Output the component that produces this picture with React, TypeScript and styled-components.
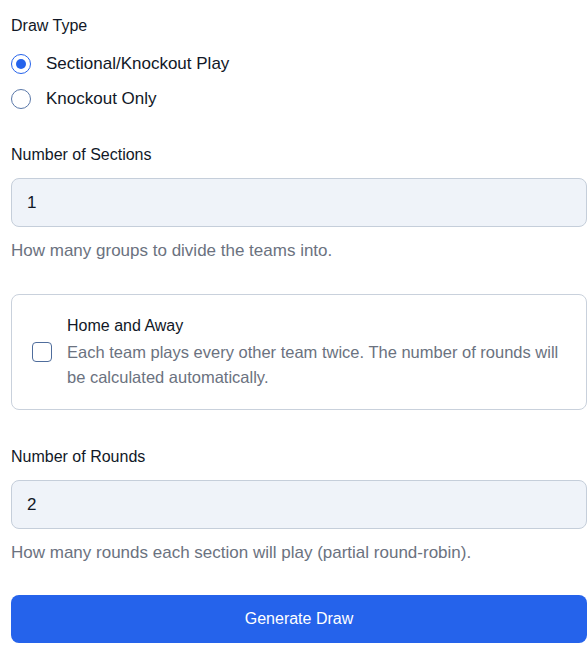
import React, { useState } from "react";
import styled, { createGlobalStyle } from "styled-components";

const GlobalStyle = createGlobalStyle`
  * { box-sizing: border-box; }
  body {
    margin: 0;
    background: #ffffff;
    font-family: "Liberation Sans", Arial, sans-serif;
  }
`;

const Form = styled.form`
  width: 588px;
  padding: 14px 1px 0 11px;
  display: flex;
  flex-direction: column;
`;

const Field = styled.div<{ $gapBelow?: number }>`
  display: flex;
  flex-direction: column;
  margin-bottom: ${(p) => p.$gapBelow ?? 31}px;
`;

const Label = styled.label`
  font-size: 16px;
  line-height: 24px;
  color: #111827;
  margin-bottom: 11px;
`;

const GroupLabel = styled(Label)`
  margin-bottom: 14px;
`;

const Options = styled.div`
  display: flex;
  flex-direction: column;
  gap: 11px;
`;

const OptionRow = styled.label`
  display: flex;
  align-items: center;
  gap: 15px;
  height: 24px;
  font-size: 17px;
  color: #111827;
  cursor: pointer;
`;

const Radio = styled.input.attrs({ type: "radio" })`
  appearance: none;
  margin: 0;
  width: 20px;
  height: 20px;
  border-radius: 50%;
  border: 1.5px solid #5a78a8;
  background: #ffffff;
  display: grid;
  place-items: center;

  &:checked {
    border-color: #2563eb;
  }
  &:checked::after {
    content: "";
    width: 10px;
    height: 10px;
    border-radius: 50%;
    background: #2563eb;
  }
`;

const TextInput = styled.input`
  height: 49px;
  width: 100%;
  padding: 0 15px;
  border: 1px solid #c5ceda;
  border-radius: 8px;
  background: #eff3f9;
  font-family: inherit;
  font-size: 17px;
  color: #111827;
  outline: none;
`;

const Help = styled.p`
  margin: 12px 0 0;
  font-size: 17px;
  line-height: 24px;
  color: #6b7280;
`;

const Card = styled.label`
  display: flex;
  align-items: center;
  gap: 15px;
  padding: 19px 20px 19px;
  border: 1px solid #c9d1dc;
  border-radius: 8px;
  margin-bottom: 35px;
  cursor: pointer;
`;

const Checkbox = styled.input.attrs({ type: "checkbox" })`
  appearance: none;
  margin: 0;
  flex: none;
  width: 20px;
  height: 20px;
  border: 1.5px solid #4f6d9c;
  border-radius: 4px;
  background: #ffffff;
`;

const CardText = styled.div`
  display: flex;
  flex-direction: column;
  gap: 2px;
`;

const CardTitle = styled.span`
  font-size: 16px;
  line-height: 24px;
  color: #111827;
`;

const CardDesc = styled.span`
  font-size: 16.5px;
  line-height: 25px;
  color: #6b7280;
`;

const SubmitButton = styled.button`
  height: 48px;
  width: 100%;
  border: none;
  border-radius: 8px;
  background: #2563eb;
  color: #ffffff;
  font-family: inherit;
  font-size: 16px;
  cursor: pointer;
`;

export default function App() {
  const [drawType, setDrawType] = useState("sectional");
  const [sections, setSections] = useState("1");
  const [rounds, setRounds] = useState("2");
  const [homeAway, setHomeAway] = useState(false);

  return (
    <>
      <GlobalStyle />
      <Form onSubmit={(e) => e.preventDefault()}>
        <Field $gapBelow={32}>
          <GroupLabel>Draw Type</GroupLabel>
          <Options>
            <OptionRow>
              <Radio
                name="drawType"
                checked={drawType === "sectional"}
                onChange={() => setDrawType("sectional")}
              />
              Sectional/Knockout Play
            </OptionRow>
            <OptionRow>
              <Radio
                name="drawType"
                checked={drawType === "knockout"}
                onChange={() => setDrawType("knockout")}
              />
              Knockout Only
            </OptionRow>
          </Options>
        </Field>

        <Field>
          <Label>Number of Sections</Label>
          <TextInput value={sections} onChange={(e) => setSections(e.target.value)} />
          <Help>How many groups to divide the teams into.</Help>
        </Field>

        <Card>
          <Checkbox checked={homeAway} onChange={(e) => setHomeAway(e.target.checked)} />
          <CardText>
            <CardTitle>Home and Away</CardTitle>
            <CardDesc>
              Each team plays every other team twice. The number of rounds will be calculated
              automatically.
            </CardDesc>
          </CardText>
        </Card>

        <Field $gapBelow={30}>
          <Label>Number of Rounds</Label>
          <TextInput value={rounds} onChange={(e) => setRounds(e.target.value)} />
          <Help>How many rounds each section will play (partial round-robin).</Help>
        </Field>

        <SubmitButton type="submit">Generate Draw</SubmitButton>
      </Form>
    </>
  );
}
